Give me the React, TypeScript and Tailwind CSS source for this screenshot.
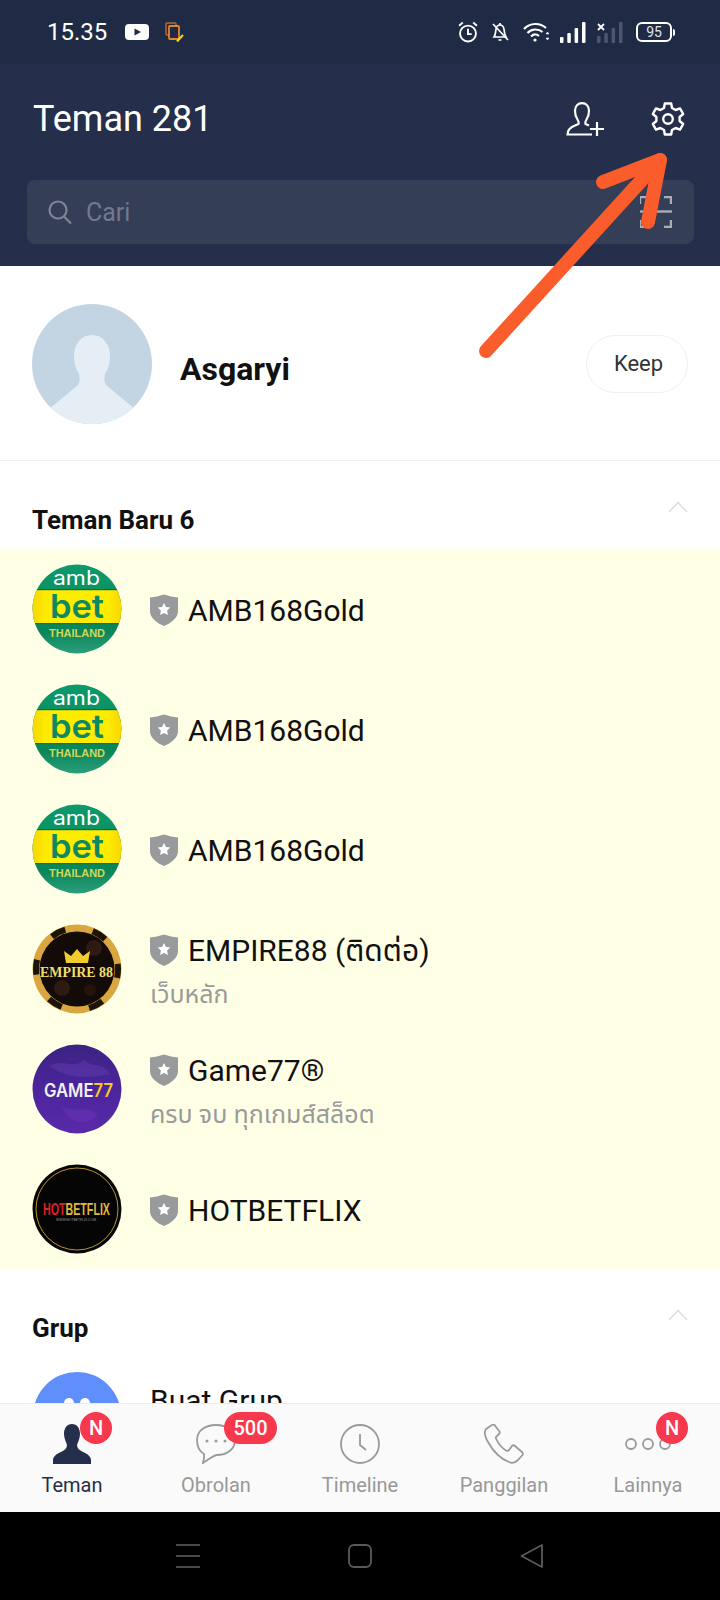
import React from "react";

const AmbLogo = () => (
  <svg viewBox="0 0 90 90" className="w-[90px] h-[90px] shrink-0">
    <defs>
      <clipPath id="ambClip">
        <circle cx="45" cy="45" r="44.5" />
      </clipPath>
      <linearGradient id="ambBand" x1="0" x2="1" y1="0" y2="0">
        <stop offset="0%" stopColor="#f6d400" />
        <stop offset="15%" stopColor="#fdec00" />
        <stop offset="85%" stopColor="#fdec00" />
        <stop offset="100%" stopColor="#f6d400" />
      </linearGradient>
      <linearGradient id="ambGreen" x1="0" x2="0" y1="0" y2="1">
        <stop offset="0%" stopColor="#0c9a6c" />
        <stop offset="75%" stopColor="#0a8659" />
        <stop offset="100%" stopColor="#2c9f7c" />
      </linearGradient>
    </defs>
    <g clipPath="url(#ambClip)">
      <rect width="90" height="90" fill="url(#ambGreen)" />
      <rect y="26" width="90" height="33" fill="url(#ambBand)" />
      <rect y="25" width="90" height="1.2" fill="#0a6f50" />
      <rect y="59" width="90" height="1.2" fill="#0a6f50" />
      <text x="21" y="21" fontSize="20" fill="#fff" fontFamily="Inter, sans-serif" textLength="47" lengthAdjust="spacingAndGlyphs">amb</text>
      <text x="18" y="54" fontSize="33" fontWeight="600" fill="#0b8a63" fontFamily="Inter, sans-serif" textLength="54" lengthAdjust="spacingAndGlyphs">bet</text>
      <text x="17" y="73" fontSize="11.5" fontWeight="700" fill="#cfd75c" fontFamily="Liberation Sans, sans-serif" textLength="56" lengthAdjust="spacingAndGlyphs">THAILAND</text>
    </g>
  </svg>
);

const EmpireLogo = () => (
  <svg viewBox="0 0 90 90" className="w-[90px] h-[90px] shrink-0">
    <circle cx="45" cy="45" r="44.5" fill="#d9a63f" />
    <circle cx="45" cy="45" r="41" fill="none" stroke="#1c1408" strokeWidth="6" strokeDasharray="15 28" strokeDashoffset="6" />
    <circle cx="45" cy="45" r="37.500" fill="#120b08" />
    <circle cx="30" cy="64" r="8" fill="#2d1a10" />
    <circle cx="62" cy="24" r="8" fill="#2d1a10" />
    <circle cx="58" cy="66" r="6" fill="#241409" />
    <path d="M34 39 L32 27 L39 32 L45 25 L51 32 L58 27 L56 39 Z" fill="#f3cc2e" />
    <text x="8" y="53" fontSize="15" fontWeight="700" fill="#f1de6a" fontFamily="Liberation Serif, serif" textLength="73" lengthAdjust="spacingAndGlyphs">EMPIRE 88</text>
  </svg>
);

const GameLogo = () => (
  <svg viewBox="0 0 90 90" className="w-[90px] h-[90px] shrink-0">
    <defs>
      <linearGradient id="gameBg" x1="0" x2="0" y1="0" y2="1">
        <stop offset="0%" stopColor="#3c2383" />
        <stop offset="55%" stopColor="#4d259f" />
        <stop offset="100%" stopColor="#5a2aa8" />
      </linearGradient>
    </defs>
    <circle cx="45" cy="45" r="44.5" fill="url(#gameBg)" />
    <path d="M18 22 C30 14 42 26 52 16 C60 24 72 18 78 30 C60 34 36 36 18 22 Z" fill="#6a47b8" opacity="0.35" />
    <path d="M30 62 C40 70 52 60 66 70 C56 82 38 82 30 62 Z" fill="#7a3cc8" opacity="0.3" />
    <text x="12" y="53" fontSize="18" fontWeight="600" fill="#f2f2f2" fontFamily="Inter, sans-serif" textLength="69" lengthAdjust="spacingAndGlyphs">GAME<tspan fill="#f5c62c">77</tspan></text>
  </svg>
);

const HotLogo = () => (
  <svg viewBox="0 0 90 90" className="w-[90px] h-[90px] shrink-0">
    <circle cx="45" cy="45" r="44.5" fill="#050505" />
    <circle cx="45" cy="45" r="41" fill="none" stroke="#b8902c" strokeWidth="1" />
    <text x="11" y="51" fontSize="17" fontWeight="700" fill="#e2b93a" fontFamily="Liberation Sans, sans-serif" textLength="67" lengthAdjust="spacingAndGlyphs">
      <tspan fill="#e01f26">HOT</tspan>BETFLIX
    </text>
    <text x="24" y="57" fontSize="3.500" fill="#999" fontFamily="Liberation Sans, sans-serif" textLength="40" lengthAdjust="spacingAndGlyphs">WWW.HOTBETFLIX.COM</text>
  </svg>
);

const Shield = () => (
  <svg viewBox="0 0 28 32" className="w-7 h-8 shrink-0">
    <path d="M0 3.500 C5 3 9 2 14 0.500 C19 2 23 3 28 3.500 V17 C28 24 21 29 14 32 C7 29 0 24 0 17 Z" fill="#999a9c" />
    <path d="M14 9 L16 13 L20.300 13.600 L17.100 16.600 L17.900 21 L14 18.900 L10.100 21 L10.900 16.600 L7.700 13.600 L12 13 Z" fill="#fff" />
  </svg>
);

const Chevron = () => (
  <svg viewBox="0 0 20 12" className="w-5 h-3" fill="none" stroke="#dcdfe2" strokeWidth="1.600">
    <path d="M1 11 L10 1.500 L19 11" />
  </svg>
);

const friends = [
  { logo: <AmbLogo />, name: "AMB168Gold" },
  { logo: <AmbLogo />, name: "AMB168Gold" },
  { logo: <AmbLogo />, name: "AMB168Gold" },
  { logo: <EmpireLogo />, name: "EMPIRE88 (ติดต่อ)", sub: "เว็บหลัก" },
  { logo: <GameLogo />, name: "Game77®", sub: "ครบ จบ ทุกเกมส์สล็อต" },
  { logo: <HotLogo />, name: "HOTBETFLIX" },
];

const StatusBar = () => (
  <div className="h-16 bg-[#1f2a44] flex items-center justify-between pl-[47px] pr-[48px] shrink-0">
    <div className="flex items-center">
      <span className="text-white text-[24px] w-[78px] leading-none">15.35</span>
      <svg viewBox="0 0 24 16" className="w-6 h-4">
        <rect width="24" height="16" rx="4" fill="#fff" />
        <path d="M9.500 4.500 L16 8 L9.500 11.500 Z" fill="#1f2a44" />
      </svg>
      <svg viewBox="0 0 19 20" className="w-[19px] h-5 ml-4" fill="none">
        <rect x="1" y="1" width="10" height="12" rx="1" stroke="#b8682c" strokeWidth="1.500" />
        <rect x="4" y="4" width="10" height="13" rx="1" fill="#1f2a44" stroke="#e58334" strokeWidth="1.800" />
        <path d="M12 19.500 L18 13" stroke="#e6d23c" strokeWidth="2.200" />
      </svg>
    </div>
    <div className="flex items-center">
      <svg viewBox="0 0 20 21" className="w-[22px] h-[22px]" fill="none" stroke="#fff" strokeWidth="1.800">
        <circle cx="10" cy="12" r="7.600" />
        <path d="M10 7.500 V12.500 H13.500" />
        <path d="M1.500 4.500 L5 1.500 M18.500 4.500 L15 1.500" />
      </svg>
      <svg viewBox="0 0 18 20" className="w-[18px] h-5 ml-3" fill="none" stroke="#fff" strokeWidth="1.700">
        <path d="M3 15 C5 12 4.500 9 5 7 C5.500 4.500 7 3 9 3 C11 3 12.500 4.500 13 7 C13.500 9 13 12 15 15 Z" />
        <path d="M9 1 V3 M7.500 18 H10.500 M2 2 L17 18" />
      </svg>
      <svg viewBox="0 0 27 20" className="w-[27px] h-5 ml-[14px]" fill="none" stroke="#fff" strokeWidth="2.200">
        <path d="M1 7 C7 0.500 17 0.500 23 6" />
        <path d="M4.500 11 C8.500 6.500 15.500 6.500 19.500 10" />
        <path d="M8 14.500 C10.500 12 13.500 12 16 14" />
        <circle cx="12" cy="18" r="1.600" fill="#fff" stroke="none" />
        <path d="M24.500 10 L23 12 H26 Z M24.500 18 L23 16 H26 Z" fill="#fff" strokeWidth="0.500" />
      </svg>
      <svg viewBox="0 0 26 21" className="w-[26px] h-[21px] ml-[10px]" fill="#fff">
        <rect x="0" y="15" width="3.500" height="6" rx="1" />
        <rect x="7.300" y="11" width="3.500" height="10" rx="1" />
        <rect x="14.600" y="6" width="3.500" height="15" rx="1" />
        <rect x="22" y="0" width="3.500" height="21" rx="1" />
      </svg>
      <svg viewBox="0 0 26 21" className="w-[26px] h-[21px] ml-[11px]">
        <g fill="#4c566d">
          <rect x="0" y="14" width="3.500" height="7" rx="1" />
          <rect x="7.300" y="11" width="3.500" height="10" rx="1" />
          <rect x="14.600" y="6" width="3.500" height="15" rx="1" />
          <rect x="22" y="0" width="3.500" height="21" rx="1" />
        </g>
        <path d="M1 2 L7 8 M7 2 L1 8" stroke="#fff" strokeWidth="1.800" />
      </svg>
      <div className="relative ml-[13px] w-[36px] h-5 rounded-[6px] border-2 border-white flex items-center justify-center text-[#dfe2e8] text-[14px] leading-none">
        95
        <span className="absolute -right-[5px] top-[5px] w-[2px] h-[7px] bg-white rounded-r-sm" />
      </div>
    </div>
  </div>
);

const Header = () => (
  <header className="h-[202px] bg-[#252f4b] shrink-0 px-[27px] pt-[37px]">
    <div className="flex items-center justify-between h-[36px] pl-[6px] pr-[8px]">
      <h1 className="text-white text-[36px] leading-none font-normal">Teman 281</h1>
      <div className="flex items-center gap-[47px]">
        <svg viewBox="0 0 38 34" className="w-[38px] h-[34px]" fill="none" stroke="#fff" strokeWidth="2.200">
          <path d="M26 32.500 H1.500 C1.500 28 4 25.500 9 23.500 L12.500 22 C13 20 12.500 19 11.500 17.500 C9.500 14.500 9 11.500 9 9 C9 4 12 1.200 16 1.200 C20 1.200 23 4 23 9 C23 11.500 22.500 14.500 20.500 17.500 C19.500 19 19 20 19.500 22 L23 23.500" />
          <path d="M31 20 V34 M24 27 H38" />
        </svg>
        <svg viewBox="0 0 34 34" className="w-[34px] h-[34px]" fill="none" stroke="#fff" strokeWidth="2.400" strokeLinejoin="round">
          <path d="M13.800 1.500 H20.200 L21 6 L24.600 8 L29 6.400 L32.200 12 L28.600 15 V19 L32.200 22 L29 27.600 L24.600 26 L21 28 L20.200 32.500 H13.800 L13 28 L9.400 26 L5 27.600 L1.800 22 L5.400 19 V15 L1.800 12 L5 6.400 L9.400 8 L13 6 Z" />
          <circle cx="17" cy="17" r="4.800" />
        </svg>
      </div>
    </div>
    <div className="mt-[43px] h-[64px] w-[667px] rounded-lg bg-[#343e57] flex items-center pl-[21px] pr-[22px]">
      <svg viewBox="0 0 24 24" className="w-6 h-6" fill="none" stroke="#7d8597" strokeWidth="2.200">
        <circle cx="10" cy="10" r="8.500" />
        <path d="M16 16.500 L23 23.500" />
      </svg>
      <span className="ml-[14px] mt-[1px] text-[25px] leading-none text-[#6f7a8e]">Cari</span>
      <svg viewBox="0 0 32 32" className="w-8 h-8 ml-auto" fill="none" stroke="#a9aeb9" strokeWidth="2.400">
        <path d="M0 8 V1 H8 M24 1 H31 V8 M0 24 V31 H8 M24 31 H31 V24" />
        <path d="M0 15.500 H32" />
      </svg>
    </div>
  </header>
);

const Profile = () => (
  <div className="h-[195px] border-b border-[#f0f0f0] flex items-center pl-8 pr-8 pt-[1px]">
    <svg viewBox="0 0 120 120" className="w-[120px] h-[120px]">
      <defs>
        <clipPath id="profileClip">
          <circle cx="60" cy="60" r="60" />
        </clipPath>
      </defs>
      <g clipPath="url(#profileClip)">
        <rect width="120" height="120" fill="#c3d5e3" />
        <path d="M60 31 C71 31 78 40 78 53 C78 60 76 65 73 70 C72 74 72 78 74 81 L104 106 V120 H16 V106 L46 81 C48 78 48 74 47 70 C44 65 42 60 42 53 C42 40 49 31 60 31 Z" fill="#e6eef5" />
      </g>
    </svg>
    <span className="ml-[28px] mt-[10px] text-[32px] leading-[38px] font-bold text-[#111]">Asgaryi</span>
    <button className="ml-auto w-[102px] h-[58px] rounded-full border border-[#f0f0f0] text-[22px] text-[#333] pl-[3px]">
      Keep
    </button>
  </div>
);

const SectionHead = ({ title }: { title: string }) => (
  <div className="h-[88px] flex items-end justify-between pl-8 pr-8 pb-[14px]">
    <span className="text-[26px] leading-[30px] font-bold text-[#111]">{title}</span>
    <span className="mb-[22px]">
      <Chevron />
    </span>
  </div>
);

const tabs = ["Teman", "Obrolan", "Timeline", "Panggilan", "Lainnya"];

const TabIcon = ({ index }: { index: number }) => {
  if (index === 0)
    return (
      <svg viewBox="0 0 38 40" className="w-[38px] h-10 -ml-[1px]">
        <path d="M19 0 C24 0 27 4 27 10 C27 14 25 18 24 21 C24 24 26 26 30 28 C35 30 38 33 38 36 V40 H0 V36 C0 33 3 30 8 28 C12 26 14 24 14 21 C13 18 11 14 11 10 C11 4 14 0 19 0 Z" fill="#252f4b" />
      </svg>
    );
  if (index === 1)
    return (
      <svg viewBox="0 0 40 40" className="w-10 h-10" fill="none" stroke="#9a9a9a" strokeWidth="1.800">
        <path d="M20 1 C30 1 39 6 39 16 C39 26 30 31 21 31 C18 31 15 34 7 39 C8 35 8.500 33 8 30 C3 27 1 22 1 16 C1 6 10 1 20 1 Z" />
        <circle cx="11" cy="17" r="1.500" fill="#9a9a9a" stroke="none" />
        <circle cx="20" cy="17" r="1.500" fill="#9a9a9a" stroke="none" />
        <circle cx="29" cy="17" r="1.500" fill="#9a9a9a" stroke="none" />
      </svg>
    );
  if (index === 2)
    return (
      <svg viewBox="0 0 40 40" className="w-10 h-10" fill="none" stroke="#9a9a9a" strokeWidth="1.800">
        <circle cx="20" cy="20" r="19" />
        <path d="M20 10 V21 L26 26" />
      </svg>
    );
  if (index === 3)
    return (
      <svg viewBox="0 0 40 40" className="w-10 h-10" fill="none" stroke="#9a9a9a" strokeWidth="1.800" strokeLinejoin="round">
        <path d="M8 1 L2 5 C0 8 1 13 4 18 C9 27 17 35 25 38 C29 40 32 38 34 36 L38.500 31 C39 30 39 29 38 28 L31 22 C30 21 29 21 28 22 L25 26 C24 27 23 27 22 26.500 C18 24 14 19 12 14.500 C11.500 13.500 12 12.500 13 12 L15 10 C16 9 16 8.500 15.500 7.500 L10.500 1 C10 0.500 9 0.500 8 1 Z" />
      </svg>
    );
  return (
    <svg viewBox="0 0 48 40" className="w-12 h-10" fill="none" stroke="#9a9a9a" strokeWidth="1.800">
      <circle cx="7" cy="20" r="5" />
      <circle cx="24" cy="20" r="5" />
      <circle cx="41" cy="20" r="5" />
    </svg>
  );
};

const TabBar = () => (
  <nav className="h-[109px] bg-[#fafafa] border-t border-[#ececec] grid grid-cols-5 shrink-0">
    {tabs.map((t, i) => (
      <div key={t} className="relative flex flex-col items-center pt-[20px]">
        <TabIcon index={i} />
        <span className={`mt-[9px] text-[20px] leading-[24px] ${i === 0 ? "text-[#252f4b]" : "text-[#989898]"}`}>{t}</span>
        {i === 0 && (
          <span className="absolute left-[80px] top-[8px] w-8 h-8 rounded-full bg-[#f8384d] text-white text-[20px] font-medium flex items-center justify-center">N</span>
        )}
        {i === 1 && (
          <span className="absolute left-[80px] top-[8px] w-[53px] h-8 rounded-full bg-[#f8384d] text-white text-[20px] font-medium flex items-center justify-center">500</span>
        )}
        {i === 4 && (
          <span className="absolute left-[80px] top-[8px] w-8 h-8 rounded-full bg-[#f8384d] text-white text-[20px] font-medium flex items-center justify-center">N</span>
        )}
      </div>
    ))}
  </nav>
);

const NavBar = () => (
  <div className="h-[88px] bg-black flex items-start justify-center gap-[148px] pt-8 shrink-0">
    <svg viewBox="0 0 24 24" className="w-6 h-6" fill="none" stroke="#4a4a4a" strokeWidth="1.800">
      <path d="M0 1 H24 M0 12 H24 M0 23 H24" />
    </svg>
    <svg viewBox="0 0 24 24" className="w-6 h-6" fill="none" stroke="#5a5a5a" strokeWidth="1.800">
      <rect x="1" y="1" width="22" height="22" rx="5" />
    </svg>
    <svg viewBox="0 0 24 24" className="w-6 h-6" fill="none" stroke="#5a5a5a" strokeWidth="1.800" strokeLinejoin="round">
      <path d="M22 1 V23 L1.500 12 Z" />
    </svg>
  </div>
);

export default function App() {
  return (
    <div className="relative w-[720px] h-[1600px] overflow-hidden flex flex-col bg-white font-[Roboto,'Noto_Sans','Noto_Sans_Thai',sans-serif]">
      <StatusBar />
      <Header />
      <main className="flex-1 overflow-hidden">
        <Profile />
        <SectionHead title="Teman Baru 6" />
        <div className="bg-[#ffffe6]">
          {friends.map((f, i) => (
            <div key={i} className="h-[120px] flex items-center pl-8 gap-7">
              {f.logo}
              <div className="flex flex-col pt-[3px]">
                <div className="flex items-center gap-[10px]">
                  <span className="mb-[2px]">
                    <Shield />
                  </span>
                  <span className="text-[30px] leading-[36px] text-[#111]">{f.name}</span>
                </div>
                {f.sub && <span className="mt-[12px] text-[25px] leading-[28px] text-[#9a9a9a]">{f.sub}</span>}
              </div>
            </div>
          ))}
        </div>
        <SectionHead title="Grup" />
        <div className="flex items-center pl-[33px] pt-[15px] gap-[29px]">
          <svg viewBox="0 0 88 88" className="w-[88px] h-[88px] shrink-0">
            <circle cx="44" cy="44" r="44" fill="#5f8ffb" />
            <circle cx="36" cy="31" r="5" fill="#fff" />
            <circle cx="52" cy="31" r="5" fill="#fff" />
          </svg>
          <span className="text-[30px] leading-[36px] text-[#111] -mt-[30px]">Buat Grup</span>
        </div>
      </main>
      <TabBar />
      <NavBar />
      {/* arrow drawn on top of the screenshot */}
      <svg viewBox="0 0 720 1600" className="absolute inset-0 w-[720px] h-[1600px] pointer-events-none" fill="none" stroke="#fb5c2c" strokeWidth="14" strokeLinecap="round" strokeLinejoin="round">
        <path d="M486 351 L660 160" />
        <path d="M603 182 L660 160 L648 222" />
      </svg>
    </div>
  );
}
